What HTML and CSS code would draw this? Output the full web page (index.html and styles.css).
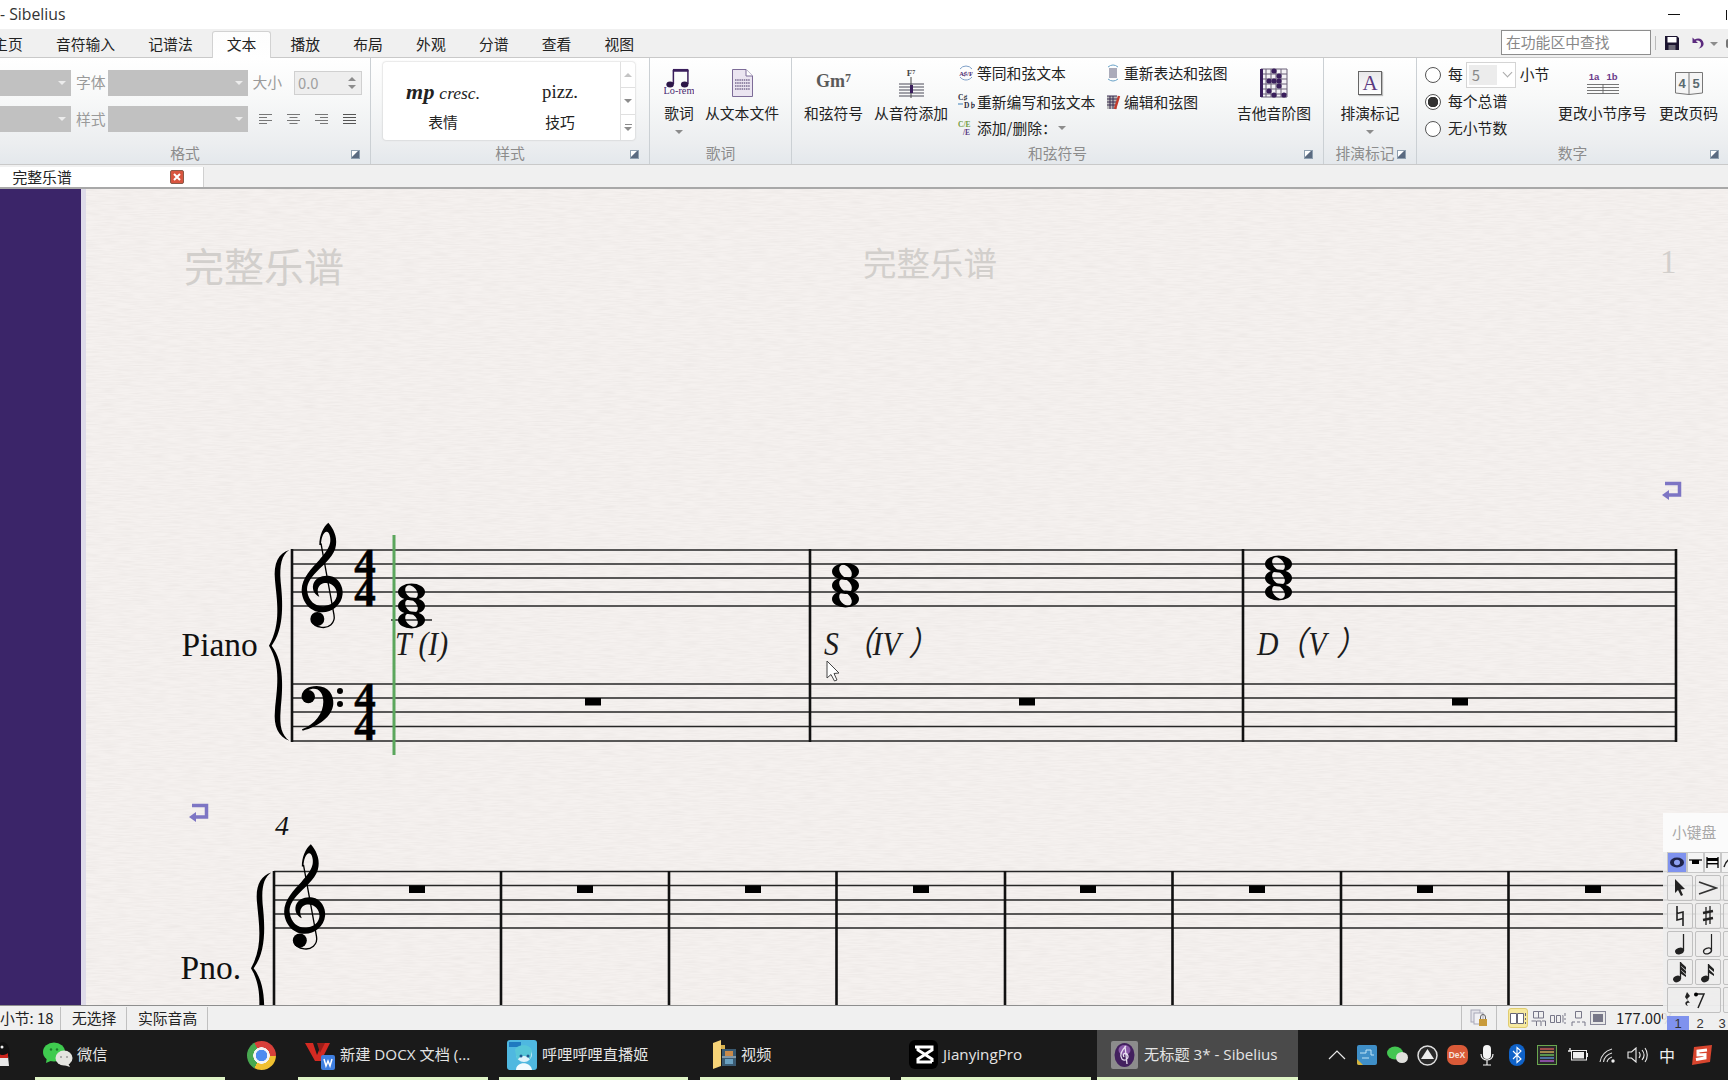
FILE: index.html
```html
<!DOCTYPE html>
<html lang="zh">
<head>
<meta charset="utf-8">
<title>无标题 3* - Sibelius</title>
<link rel="stylesheet" href="styles.css">
</head>
<body>
<svg class="defs" width="0" height="0" aria-hidden="true">
  <defs>
    <filter id="paper" x="0" y="0" width="100%" height="100%">
      <feTurbulence type="fractalNoise" baseFrequency="0.06 0.75" numOctaves="2" seed="4"/>
      <feColorMatrix values="0 0 0 0 .45  0 0 0 0 .41  0 0 0 0 .39  .2 0 0 0 -.065"/>
    </filter>
    <g id="clef-treble" transform="translate(160 500) scale(.3333)">
      <path d="M505 68C520 85 532 110 528 135C525 165 495 190 470 215C450 235 438 255 442 275C446 305 470 322 495 318C520 314 535 295 530 275C526 255 505 245 490 250C475 255 468 270 478 290C465 285 455 270 460 252C466 232 490 224 510 228C535 232 550 258 548 282C545 315 515 338 485 337C450 336 425 305 425 270C425 235 455 205 478 180C490 165 505 150 510 130C514 115 508 95 500 95C490 95 483 115 483 135L478 135C478 105 490 80 505 68Z"/>
      <path d="M483 130L522 345C527 370 505 385 485 382C470 380 458 372 455 360" fill="none" stroke="#000" stroke-width="4"/>
      <circle cx="472" cy="357" r="21"/>
    </g>
    <g id="clef-bass" transform="translate(160 500) scale(.3333)">
      <path d="M425 590C425 570 445 558 470 558C505 558 522 585 520 612C517 650 475 680 428 692L426 688C465 672 490 640 490 605C490 580 478 566 462 566C448 566 438 574 434 584Z"/>
      <circle cx="445" cy="590" r="20"/>
      <circle cx="540" cy="573" r="9"/>
      <circle cx="540" cy="612" r="9"/>
    </g>
    <path id="brace" transform="translate(160 500) scale(.3333)" d="M388 150C355 160 340 190 345 240C350 300 365 370 327 437C365 500 350 570 345 630C340 680 355 710 388 722C365 705 358 680 362 630C368 570 375 490 335 437C375 385 368 300 362 245C358 195 365 165 388 150Z"/>
    <path id="whole" fill-rule="evenodd" d="M-13.5 0a13.5 8.5 0 1 0 27 0a13.5 8.5 0 1 0-27 0zM-4.9-5.8A7.6 4.900 50 1 0 4.900 5.800A7.6 4.900 50 1 0-4.900-5.800z"/>
    <g id="ret">
      <path d="M192 805.5H206.5V817H194" fill="none" stroke="#7d75c4" stroke-width="3.5"/>
      <path d="M189 817L196 812V822Z" fill="#7d75c4"/>
    </g>
    <rect id="rest" x="-8" y="0" width="16" height="7.5"/>
  </defs>
</svg>

<div class="app">
  <header class="titlebar">
    <span class="title-text">- Sibelius</span>
    <span class="win-min"></span>
    <span class="win-max"></span>
  </header>

  <nav class="tabs">
    <span class="tab">主页</span>
    <span class="tab">音符输入</span>
    <span class="tab">记谱法</span>
    <span class="tab tab-active">文本</span>
    <span class="tab">播放</span>
    <span class="tab">布局</span>
    <span class="tab">外观</span>
    <span class="tab">分谱</span>
    <span class="tab">查看</span>
    <span class="tab">视图</span>
    <span class="search">在功能区中查找</span>
    <span class="qa-sep"></span>
    <svg class="qa-save" width="16" height="16" viewBox="0 0 16 16"><path d="M1 1H13L15 3V15H1Z" fill="#1c1530"/><rect x="3.5" y="2" width="9" height="5.5" fill="#fff"/><rect x="4.5" y="10" width="7" height="5" fill="#6d6a78"/></svg>
    <svg class="qa-undo" width="16" height="16" viewBox="0 0 16 16"><path d="M3.5 2.5V8H9L6.8 5.9C9 4.8 12 6 12 9C12 11 11 12.5 9.5 13.5C13 13 15 10.800 14.500 8C14 4 9.500 2 5.600 4.500Z" fill="#5b2a7e"/></svg>
    <span class="tri tri-gray qa-arrow"></span>
    <span class="qa-cut"></span>
  </nav>

  <section class="ribbon">
    <div class="group g-format">
      <div class="format-body">
        <div class="frow">
          <span class="dd dd-a"><span class="tri tri-light"></span></span>
          <span class="flabel l-font lift">字体</span>
          <span class="dd dd-b"><span class="tri tri-light"></span></span>
          <span class="flabel l-size lift">大小</span>
          <span class="spin">0.0<span class="spin-btns"><span class="tri tri-up"></span><span class="tri tri-gray"></span></span></span>
        </div>
        <div class="frow frow-2">
          <span class="dd dd-a"><span class="tri tri-light"></span></span>
          <span class="flabel l-font">样式</span>
          <span class="dd dd-b"><span class="tri tri-light"></span></span>
          <span class="aligns">
            <svg width="13" height="11" viewBox="0 0 13 11"><path d="M0 .5H13M0 3.500H8M0 6.500H13M0 9.500H8" stroke="#777"/></svg>
            <svg width="13" height="11" viewBox="0 0 13 11"><path d="M0 .5H13M2.500 3.500H10.500M0 6.500H13M2.500 9.500H10.500" stroke="#777"/></svg>
            <svg width="13" height="11" viewBox="0 0 13 11"><path d="M0 .5H13M5 3.500H13M0 6.500H13M5 9.500H13" stroke="#777"/></svg>
            <svg width="13" height="11" viewBox="0 0 13 11"><path d="M0 .5H13M0 3.500H13M0 6.500H13M0 9.500H13" stroke="#555"/></svg>
          </span>
        </div>
      </div>
      <div class="group-label">格式</div>
      <span class="launcher"></span>
    </div>

    <div class="group g-style">
      <div class="gallery">
        <div class="gitem gitem-a"><span class="sample"><b>mp</b> <i>cresc.</i></span><span class="gname">表情</span></div>
        <div class="gitem gitem-b"><span class="sample">pizz.</span><span class="gname">技巧</span></div>
        <div class="gscroll">
          <span class="gs"><span class="tri tri-up tri-pale"></span></span>
          <span class="gs"><span class="tri tri-gray"></span></span>
          <span class="gs gs-more"><span class="gs-bar"></span><span class="tri tri-gray"></span></span>
        </div>
      </div>
      <div class="group-label">样式</div>
      <span class="launcher"></span>
    </div>

    <div class="group g-lyrics">
      <div class="group-body lyrics-body">
        <div class="big w30">
          <span class="icon">
            <svg width="32" height="30" viewBox="0 0 32 30"><path d="M9.500 0H26V3H9.500Z" fill="#3a1e5c"/><path d="M10 1V16M25.500 1V16" stroke="#3a1e5c" stroke-width="1.600"/><ellipse cx="6.500" cy="16.500" rx="4" ry="3.200" fill="#2c1648"/><ellipse cx="22" cy="16.500" rx="4" ry="3.200" fill="#2c1648"/><text class="ico-lorem" x="16" y="27">Lo-rem</text></svg>
          </span>
          <span class="big-text">歌词</span>
          <span class="tri tri-gray big-arrow"></span>
        </div>
        <div class="big w74">
          <span class="icon">
            <svg width="21" height="28" viewBox="0 0 21 28"><path d="M.5 .5H14L20.500 7V27.500H.5Z" fill="#ebe5f1" stroke="#7d6c98"/><path d="M14 .5V7H20.500" fill="#fff" stroke="#7d6c98"/><path d="M3 11H18M3 14H18M3 17H18M3 20H18" stroke="#3f2e60" stroke-dasharray="1.500 .7"/></svg>
          </span>
          <span class="big-text">从文本文件</span>
        </div>
      </div>
      <div class="group-label">歌词</div>
    </div>

    <div class="group g-chords">
      <div class="group-body chords-body">
        <div class="big w59">
          <span class="icon"><span class="gm">Gm<sup>7</sup></span></span>
          <span class="big-text">和弦符号</span>
        </div>
        <div class="big w74">
          <span class="icon">
            <svg width="28" height="30" viewBox="0 0 28 30"><text class="ico-f7" x="14" y="8">F<tspan dy="-2" font-size="6">7</tspan></text><path d="M14 9V30" stroke="#444"/><path d="M2 16H27M2 19H27M2 22H27M2 25H27M2 28H27" stroke="#4a4a58" stroke-width="1.100"/><path d="M13 17H16V25H13Z" fill="#3a1e5c"/></svg>
          </span>
          <span class="big-text">从音符添加</span>
        </div>
        <div class="small-col c1">
          <div class="small"><svg class="sm-ic" width="18" height="18" viewBox="0 0 18 18"><path d="M3 5A7.500 7.500 0 0 1 15 5M15 13A7.500 7.500 0 0 1 3 13" fill="none" stroke="#7fa0c8"/><text class="ico-tiny" x="9" y="12">A♯/F</text></svg>等同和弦文本</div>
          <div class="small"><svg class="sm-ic" width="18" height="18" viewBox="0 0 18 18"><text class="ico-tiny2" x="1" y="7">C♯</text><path d="M1 11H6" stroke="#3d7fb8"/><text class="ico-tiny2" x="7" y="15">D♭</text></svg>重新编写和弦文本</div>
          <div class="small"><svg class="sm-ic" width="18" height="18" viewBox="0 0 18 18"><text class="ico-tiny3" x="1" y="8">C/E</text><text class="ico-tiny4" x="6" y="16">/E</text></svg>添加/删除：<span class="tri tri-gray small-arrow"></span></div>
        </div>
        <div class="small-col c2">
          <div class="small"><svg class="sm-ic" width="18" height="18" viewBox="0 0 18 18"><path d="M4 3A8 8 0 0 1 14 3M14 15A8 8 0 0 1 4 15" fill="none" stroke="#6aa3c8"/><path d="M5 5H13M5 7H13M5 9H13M5 11H13M5 13H13" stroke="#5b5b78" stroke-width="1.100"/></svg>重新表达和弦图</div>
          <div class="small"><svg class="sm-ic" width="18" height="18" viewBox="0 0 18 18"><rect x="3" y="3" width="10" height="13" fill="#bbb"/><path d="M3 3H13M3 6H13M3 9H13M3 12H13M6 3V16M9 3V16" stroke="#3a2c50"/><path d="M15 3L11 16" stroke="#c23a2c" stroke-width="2.500"/></svg>编辑和弦图</div>
        </div>
        <div class="big w74">
          <span class="icon">
            <svg width="28" height="30" viewBox="0 0 28 30"><path d="M1 1H27V29H1ZM1 6H27M1 11H27M1 16H27M1 21H27M1 26H27M6 1V29M11 1V29M16 1V29M21 1V29" fill="#f4f2f6" stroke="#6b6078"/><g fill="#3a1e5c"><rect x="0" y="1" width="3" height="28"/><circle cx="14" cy="3" r="2.600"/><circle cx="19" cy="8" r="2.600"/><circle cx="14" cy="13" r="2.600"/><circle cx="19" cy="13" r="2.600"/><circle cx="9" cy="13" r="2.600"/><circle cx="19" cy="18" r="2.600"/><circle cx="9" cy="23" r="2.600"/><circle cx="14" cy="27" r="2.600"/><circle cx="24" cy="27" r="2.600"/></g></svg>
          </span>
          <span class="big-text">吉他音阶图</span>
        </div>
      </div>
      <div class="group-label">和弦符号</div>
      <span class="launcher"></span>
    </div>

    <div class="group g-marks">
      <div class="group-body marks-body">
        <div class="big w59">
          <span class="icon"><span class="abox">A</span></span>
          <span class="big-text">排演标记</span>
          <span class="tri tri-gray big-arrow"></span>
        </div>
      </div>
      <div class="group-label label-marks">排演标记</div>
      <span class="launcher launcher-marks"></span>
    </div>

    <div class="group g-numbers">
      <div class="group-body numbers-body">
        <div class="radios">
          <div class="radio-row"><span class="radio"></span>每<span class="sel"><span class="sel-val">5</span><span class="chev"></span></span><span class="sel-after">小节</span></div>
          <div class="radio-row"><span class="radio radio-on"></span>每个总谱</div>
          <div class="radio-row"><span class="radio"></span>无小节数</div>
        </div>
        <div class="big w89">
          <span class="icon">
            <svg width="36" height="24" viewBox="0 0 36 24"><text class="ico-bar" x="9" y="9">1a</text><text class="ico-bar" x="27" y="9">1b</text><path d="M2 13.500H34M2 16.500H34M2 19.500H34M2 22.500H34M18 13V23" stroke="#666" stroke-width=".9"/></svg>
          </span>
          <span class="big-text">更改小节序号</span>
        </div>
        <div class="big w59 pages">
          <span class="icon">
            <svg width="28" height="24" viewBox="0 0 28 24"><path d="M.5 1.500H27.500V22L14 23.500L.5 22Z" fill="#f5f5f5" stroke="#777"/><path d="M14 1.500V23" stroke="#777"/><text class="ico-page" x="7" y="17">4</text><text class="ico-page" x="21" y="17">5</text></svg>
          </span>
          <span class="big-text">更改页码</span>
        </div>
      </div>
      <div class="group-label label-num">数字</div>
      <span class="launcher launcher-num"></span>
    </div>
  </section>

  <div class="doctabs">
    <div class="doctab">
      <span>完整乐谱</span>
      <span class="doc-close"><svg width="12" height="12" viewBox="0 0 12 12"><path d="M3 3L9 9M9 3L3 9" stroke="#fff" stroke-width="2"/></svg></span>
    </div>
  </div>

  <main class="main">
    <div class="side"></div>
    <div class="side-edge"></div>
    <svg class="score" width="1642" height="816" viewBox="86 189 1642 816">
      <rect class="paper" x="86" y="189" width="1642" height="816"/>
      <rect x="86" y="189" width="1642" height="816" filter="url(#paper)"/>

      <text class="faint t-big" x="184" y="282">完整乐谱</text>
      <text class="faint t-mid" x="863" y="276">完整乐谱</text>
      <text class="faint t-num" x="1660" y="273">1</text>

      <use href="#ret" x="1473" y="-322"/>
      <use href="#ret"/>

      <path class="staff" d="M292 550H1676M292 564H1676M292 578H1676M292 592H1676M292 606H1676M292 684H1676M292 698H1676M292 712H1676M292 726.500H1676M292 741H1676"/>
      <path class="bar" d="M292 549V742M810 549V742M1243 549V742M1676 549V742"/>
      <path class="staff" d="M391 620H432"/>
      <use href="#brace"/>
      <use href="#clef-treble"/>
      <use href="#clef-bass"/>
      <text class="timesig"><tspan x="365" y="578">4</tspan><tspan x="365" y="606">4</tspan></text>
      <text class="timesig"><tspan x="365" y="712">4</tspan><tspan x="365" y="740">4</tspan></text>
      <text class="instr" x="181.500" y="656">Piano</text>

      <use href="#whole" x="411.500" y="592"/>
      <use href="#whole" x="411.500" y="606"/>
      <use href="#whole" x="411.500" y="620"/>
      <use href="#whole" x="845.500" y="571.500"/>
      <use href="#whole" x="845.500" y="585.500"/>
      <use href="#whole" x="845.500" y="599"/>
      <use href="#whole" x="1278.500" y="564"/>
      <use href="#whole" x="1278.500" y="578"/>
      <use href="#whole" x="1278.500" y="592"/>

      <use href="#rest" x="593" y="698"/>
      <use href="#rest" x="1027" y="698"/>
      <use href="#rest" x="1460" y="698"/>

      <text class="chord" transform="translate(395 655) scale(.9 1)">T (I)</text>
      <text class="chord" transform="translate(824 655) scale(.9 1)">S<tspan x="22">（</tspan><tspan x="54">IV</tspan><tspan x="94">）</tspan></text>
      <text class="chord" transform="translate(1257 655) scale(.9 1)">D<tspan x="22">（</tspan><tspan x="57">V</tspan><tspan x="88">）</tspan></text>

      <rect class="playline" x="392.500" y="535" width="3" height="220"/>

      <path class="cursor" d="M827 661V678L831 674.500L834.500 681L837 680L834 673.500L839 673Z"/>

      <text class="barnum" x="275" y="835">4</text>
      <text class="instr" x="180.500" y="979">Pno.</text>
      <path class="staff" d="M274 871.500H1728M274 885.500H1728M274 900H1728M274 914H1728M274 928H1728"/>
      <path class="bar" d="M274 871V1005M501 871V1005M669 871V1005M836.500 871V1005M1005 871V1005M1172.500 871V1005M1341 871V1005M1508.500 871V1005"/>
      <use href="#brace" x="-18" y="322.500"/>
      <use href="#clef-treble" x="-17.500" y="321.500"/>
      <use href="#rest" x="417" y="885.500"/>
      <use href="#rest" x="585" y="885.500"/>
      <use href="#rest" x="753" y="885.500"/>
      <use href="#rest" x="921" y="885.500"/>
      <use href="#rest" x="1088" y="885.500"/>
      <use href="#rest" x="1257" y="885.500"/>
      <use href="#rest" x="1425" y="885.500"/>
      <use href="#rest" x="1593" y="885.500"/>
    </svg>
  </main>

  <footer class="status">
    <span class="st st-a">小节: 18</span>
    <span class="st st-b">无选择</span>
    <span class="st st-c">实际音高</span>
    <div class="st-right">
      <span class="st-lock">
        <svg width="18" height="18" viewBox="0 0 18 18"><rect x="1" y="1" width="9" height="12" fill="#e4e4ea" stroke="#a8a8b8"/><rect x="4" y="4" width="9" height="11" fill="#f0f0f4" stroke="#a8a8b8"/><rect x="9" y="10" width="8" height="7" fill="#c89a3a"/><path d="M10.500 10V8A2.500 2.500 0 0 1 15.500 8V10" fill="none" stroke="#666"/></svg>
      </span>
      <span class="view view-on"><svg width="17" height="13" viewBox="0 0 17 13"><path d="M.5 1.500H6.500V11.500H.5ZM7.500 1.500H13.500V11.500H7.500Z" fill="#fff" stroke="#667"/><path d="M15.500 1V4M15.500 6V8M15.500 10V12" stroke="#667"/></svg></span>
      <span class="view"><svg width="17" height="17" viewBox="0 0 17 17"><path d="M3.500 1.500H8.500V8H3.500ZM8.500 1.500H13.500V8H8.500ZM1.500 11H6.500V16M7 11H11V16M12 11H15.500V16" fill="none" stroke="#778"/></svg></span>
      <span class="view"><svg width="17" height="13" viewBox="0 0 17 13"><path d="M.5 3.500H4.500V10.500H.5ZM6.500 3.500H10.500V10.500H6.500ZM15 1V4M15 6V8M15 10V12M12.500 3.500H13V10.500" fill="none" stroke="#778"/></svg></span>
      <span class="view"><svg width="15" height="17" viewBox="0 0 15 17"><path d="M4.500 1.500H10.500V8H4.500ZM1 16V12H4M6 12H9M11 12H14V16" fill="none" stroke="#778"/></svg></span>
      <span class="view"><svg width="16" height="14" viewBox="0 0 16 14"><rect x=".5" y=".5" width="15" height="13" fill="#e8e8e8" stroke="#889"/><rect x="3" y="3" width="10" height="8" fill="#778"/></svg></span>
      <span class="zoomval">177.00%</span>
    </div>
  </footer>

  <aside class="keypad">
    <div class="kp-title">小键盘</div>
    <div class="kp-tools">
      <span class="kt kt-on"><svg width="16" height="11" viewBox="0 0 16 11"><ellipse cx="8" cy="5.500" rx="7" ry="5" fill="#20244a"/><ellipse cx="8" cy="5.500" rx="3" ry="2.800" fill="#8fa0f0"/></svg></span>
      <span class="kt"><svg width="13" height="8" viewBox="0 0 13 8"><path d="M0 1H13" stroke="#222" stroke-width="1.400"/><rect x="3" y="1" width="7" height="4"/></svg></span>
      <span class="kt"><svg width="13" height="11" viewBox="0 0 13 11"><path d="M1 0V11M12 0V11" stroke="#222" stroke-width="1.500"/><rect x="1" y="1" width="11" height="3"/><rect x="1" y="6" width="11" height="1.400"/></svg></span>
      <span class="kt"><svg width="13" height="11" viewBox="0 0 13 11"><path d="M1 10C3 3 8 1 12 1" fill="none" stroke="#222" stroke-width="1.500"/></svg></span>
    </div>
    <div class="kp-grid">
      <span class="kb"><svg width="12" height="18" viewBox="0 0 12 18"><path d="M1 0V14L4 11L7 17L9 16L6.500 10.500L11 10Z" fill="#222"/></svg></span>
      <span class="kb"><svg width="20" height="14" viewBox="0 0 20 14"><path d="M1 1L18 7L1 13" fill="none" stroke="#333" stroke-width="1.600"/></svg></span>
      <span class="kb"></span>
      <span class="kb"><svg width="10" height="20" viewBox="0 0 10 20"><path d="M2 0V14L8 12.500M8 20V6L2 7.500" fill="none" stroke="#222" stroke-width="1.600"/></svg></span>
      <span class="kb"><svg width="12" height="20" viewBox="0 0 12 20"><path d="M4 1V19M8 0V18" stroke="#222" stroke-width="1.300"/><path d="M1 7L11 5M1 14L11 12" stroke="#222" stroke-width="2.300"/></svg></span>
      <span class="kb"></span>
      <span class="kb"><svg width="12" height="22" viewBox="0 0 12 22"><path d="M9.500 1V18" stroke="#222" stroke-width="1.300"/><ellipse cx="5.500" cy="18" rx="4.500" ry="3.300" fill="#222" transform="rotate(-20 5.500 18)"/></svg></span>
      <span class="kb"><svg width="12" height="22" viewBox="0 0 12 22"><path d="M9.500 1V18" stroke="#222" stroke-width="1.200"/><ellipse cx="5.500" cy="18" rx="4" ry="2.800" fill="none" stroke="#222" stroke-width="1.300" transform="rotate(-20 5.500 18)"/></svg></span>
      <span class="kb"></span>
      <span class="kb"><svg width="14" height="22" viewBox="0 0 14 22"><path d="M7.500 1V18" stroke="#222" stroke-width="1.300"/><ellipse cx="4" cy="18" rx="4" ry="3.200" fill="#222" transform="rotate(-20 4 18)"/><path d="M7.500 1L13 6V9L7.500 4.500ZM7.500 5L13 10V13L7.500 8.500ZM7.500 9L13 14V16L7.500 12.500Z" fill="#222"/></svg></span>
      <span class="kb"><svg width="14" height="22" viewBox="0 0 14 22"><path d="M7.500 3V18" stroke="#222" stroke-width="1.300"/><ellipse cx="4" cy="18" rx="4" ry="3.200" fill="#222" transform="rotate(-20 4 18)"/><path d="M7.500 3L13 8V11L7.500 6.500ZM7.500 8L13 13V15L7.500 11.500Z" fill="#222"/></svg></span>
      <span class="kb"></span>
      <span class="kb kb-wide"><svg width="22" height="18" viewBox="0 0 22 18"><path d="M4 1L7 5L4 8L7 12C4 11 3 13 5 15C1 14 2 10 5 10L2 6Z" fill="#222"/><path d="M12 3H21L15 17" fill="none" stroke="#222" stroke-width="1.500"/><circle cx="13" cy="3.500" r="2"/></svg></span>
      <span class="kb"></span>
    </div>
    <div class="kp-pages"><span class="kpn kpn-on">1</span><span class="kpn">2</span><span class="kpn">3</span></div>
  </aside>

  <footer class="taskbar">
    <div class="task t-qq">
      <svg width="22" height="28" viewBox="0 0 22 28"><ellipse cx="3" cy="13" rx="7" ry="12" fill="#111"/><path d="M-3 15H8L9 25H-3Z" fill="#e8e8e8"/><path d="M-3 12C2 15 6 14 8 12V17H-3Z" fill="#c8241c"/><circle cx="2" cy="6" r="1.500" fill="#eee"/></svg>
    </div>
    <div class="task t-wechat">
      <svg class="tk-ic" width="30" height="26" viewBox="0 0 30 26"><ellipse cx="11" cy="10" rx="11" ry="9.500" fill="#3fcb4f"/><path d="M4 15L3 21L10 18Z" fill="#3fcb4f"/><ellipse cx="21" cy="16" rx="8.500" ry="7.500" fill="#e4e4e0"/><path d="M25 21L27 25L21 23Z" fill="#e4e4e0"/><circle cx="8" cy="7.500" r="1.200" fill="#1c7a2c"/><circle cx="14" cy="7.500" r="1.200" fill="#1c7a2c"/><circle cx="18" cy="15" r="1" fill="#999"/><circle cx="24" cy="15" r="1" fill="#999"/></svg>
      <span>微信</span>
    </div>
    <div class="task-plain t-chrome"><span class="chrome"></span></div>
    <div class="task t-wps">
      <svg class="tk-ic" width="30" height="30" viewBox="0 0 30 30"><path d="M0 3L8 3L12 15L17 3L25 3L16 21H10Z" fill="#d42a22"/><path d="M12 3H20L15 13Z" fill="#9a1c18"/><rect x="16" y="15" width="14" height="15" rx="2" fill="#3f7fe0"/><path d="M19 19L21 26L23 21L25 26L27 19" fill="none" stroke="#fff" stroke-width="1.500"/></svg>
      <span>新建 DOCX 文档 (...</span>
    </div>
    <div class="task t-bili">
      <svg class="tk-ic" width="30" height="30" viewBox="0 0 30 30"><rect width="30" height="30" rx="3" fill="#4fb8e0"/><rect x="2" y="2" width="12" height="5" fill="#1f7ac0"/><circle cx="17" cy="14" r="8" fill="#dff3fb"/><path d="M8 10C9 4 24 3 25 11L23 20C21 15 13 14 10 21Z" fill="#57c6d8"/><path d="M9 30C9 21 24 21 25 30Z" fill="#f2fbff"/><circle cx="14" cy="16" r="1.500" fill="#1f5a90"/><circle cx="21" cy="16" r="1.500" fill="#1f5a90"/></svg>
      <span>呼哩呼哩直播姬</span>
    </div>
    <div class="task t-folder">
      <svg class="tk-ic" width="24" height="30" viewBox="0 0 24 30"><path d="M1 3L9 0V26L1 29Z" fill="#f6d377"/><path d="M9 5H13V9H9Z" fill="#d9b24e"/><rect x="10" y="9" width="14" height="17" fill="#3a5a72"/><path d="M10 17H24" stroke="#cbd5dc"/><rect x="13" y="11" width="8" height="5" fill="#c98a4a"/><rect x="13" y="19" width="8" height="5" fill="#6aa0c0"/></svg>
      <span>视频</span>
    </div>
    <div class="task t-jy">
      <svg class="tk-ic" width="29" height="29" viewBox="0 0 29 29"><rect width="29" height="29" rx="6" fill="#000"/><path d="M6 7H23V10L9 19V22H23M23 22V19L9 10V7" fill="none" stroke="#fff" stroke-width="3"/></svg>
      <span>JianyingPro</span>
    </div>
    <div class="task t-sib">
      <svg class="tk-ic" width="29" height="30" viewBox="0 0 29 30"><rect x="1" y="1" width="27" height="28" rx="2" fill="#8c8c8c"/><ellipse cx="14.500" cy="15" rx="10" ry="12" fill="#42205e"/><ellipse cx="14.500" cy="10" rx="6" ry="5" fill="#8a5aa8"/><path d="M16 6C11 11 9 15 12 19C15 22 20 18 17 14C15 12 12 14 14 17M15 6L17 24" fill="none" stroke="#e8dff0" stroke-width="1.300"/></svg>
      <span>无标题 3* - Sibelius</span>
    </div>
    <div class="tray">
      <span class="tr"><svg width="18" height="10" viewBox="0 0 18 10"><path d="M1 9L9 1L17 9" fill="none" stroke="#e8e8e8" stroke-width="1.200"/></svg></span>
      <span class="tr"><svg width="20" height="20" viewBox="0 0 20 20"><rect width="20" height="20" rx="2" fill="#3f8fc8"/><path d="M3 8H9V5H14V10H17M5 13H12" fill="none" stroke="#bfe3f5"/><path d="M0 14L6 20H2Q0 20 0 18Z" fill="#d8b43a"/></svg></span>
      <span class="tr"><svg width="21" height="18" viewBox="0 0 21 18"><ellipse cx="8" cy="7" rx="8" ry="6.500" fill="#44c652"/><ellipse cx="15" cy="11.500" rx="6" ry="5.500" fill="#e0e0dc"/></svg></span>
      <span class="tr"><svg width="21" height="21" viewBox="0 0 21 21"><circle cx="10.500" cy="10.500" r="9.500" fill="#2a2a2a" stroke="#ddd" stroke-width="1.500"/><path d="M10.500 4L17 14H4Z" fill="#eee"/></svg></span>
      <span class="tr"><span class="dex">DeX</span></span>
      <span class="tr"><svg width="14" height="21" viewBox="0 0 14 21"><rect x="3" y="0" width="8" height="14" rx="4" fill="#f4f4f4"/><path d="M1 9C1 17 13 17 13 9M7 15V20M3 20H11" fill="none" stroke="#f4f4f4" stroke-width="1.200"/></svg></span>
      <span class="tr"><svg width="16" height="22" viewBox="0 0 16 22"><rect width="16" height="22" rx="8" fill="#0f62c8"/><path d="M4 7L12 15L8 18.500V3.500L12 7L4 15" fill="none" stroke="#fff" stroke-width="1.100"/></svg></span>
      <span class="tr"><svg width="20" height="20" viewBox="0 0 20 20"><rect x=".5" y=".5" width="19" height="19" fill="#2a2a2a" stroke="#6aa84f"/><path d="M3 4H17" stroke="#c85a5a" stroke-width="1.500"/><path d="M3 7H17" stroke="#c8a85a" stroke-width="1.500"/><path d="M3 10H17" stroke="#6ab85a" stroke-width="1.500"/><path d="M3 13H17" stroke="#5a8ac8" stroke-width="1.500"/><path d="M3 16H17" stroke="#a85ac8" stroke-width="1.500"/></svg></span>
      <span class="tr"><svg width="21" height="14" viewBox="0 0 21 14"><rect x="4.500" y="2.500" width="15" height="9.500" fill="none" stroke="#eee"/><rect x="6" y="4" width="11" height="6.500" fill="#eee"/><rect x="19.500" y="5" width="1.500" height="4" fill="#eee"/><path d="M1 3H5M3 0V3" stroke="#eee" stroke-width="1.300"/></svg></span>
      <span class="tr"><svg width="17" height="16" viewBox="0 0 17 16"><path d="M1 15C2 9 6 4 13 2M4.500 15C5 11 8 7.500 13 6M8 15C8.500 13 10 11 13 10" fill="none" stroke="#ddd" stroke-width="1.100"/><circle cx="14" cy="14" r="1.700" fill="#eee"/></svg></span>
      <span class="tr"><svg width="21" height="16" viewBox="0 0 21 16"><path d="M1 5H4.500L9 1V15L4.500 11H1Z" fill="none" stroke="#eee" stroke-width="1.100"/><path d="M12 5C13.500 7 13.500 9 12 11M15 3C17.500 6 17.500 10 15 13M18 1C21 5 21 11 18 15" fill="none" stroke="#eee" stroke-width="1.100"/></svg></span>
      <span class="tr tr-ime">中</span>
      <span class="tr tr-s"><svg width="22" height="20" viewBox="0 0 22 20"><path d="M3 2L21 0L19 17L1 20Z" fill="#d8452e"/><path d="M16 5L7 6V10L14 9.500V13L5 14.500" fill="none" stroke="#fff" stroke-width="3"/></svg></span>
    </div>
  </footer>
</div>
</body>
</html>
```

FILE: styles.css
```css
* { box-sizing: border-box; }
html, body { margin: 0; padding: 0; }
body {
  width: 1728px;
  height: 1080px;
  overflow: hidden;
  background: #f0f0f0;
  color: #222;
  font-family: "Noto Sans CJK SC", "Noto Sans", sans-serif;
  font-size: 14.8px;
  line-height: 1;
}
.defs { position: absolute; }
.app {
  position: relative;
  display: flex;
  flex-direction: column;
  width: 1728px;
  height: 1080px;
  overflow: hidden;
}

/* title bar */
.titlebar {
  flex: 0 0 29px;
  display: flex;
  align-items: center;
  background: #fff;
}
.title-text {
  font-family: "Open Sans", "Noto Sans CJK SC", sans-serif;
  font-size: 15.800px;
  color: #333;
  padding-top: 1px;
}
.win-min { width: 12px; height: 1px; background: #111; margin-left: auto; margin-right: 46px; }
.win-max { width: 2px; height: 10px; border-left: 1px solid #111; }

/* tabs */
.tabs {
  flex: 0 0 29px;
  display: flex;
  align-items: flex-end;
  background: #f0f0f0;
  border-bottom: 1px solid #c9c9c9;
  position: relative;
}
.tab {
  flex: none;
  height: 26px;
  padding: 6px 16.600px 0;
  text-align: center;
}
.tab:first-child { margin-left: -23.500px; }
.tab-active {
  background: linear-gradient(#fdfdfd, #fff);
  border: 1px solid #d2d2d2;
  border-bottom: 0;
  border-radius: 3px 3px 0 0;
  padding: 5px 13.500px 1px;
  height: 27px;
  margin: 0 3px -1px;
}
.search {
  position: absolute;
  left: 1501px;
  top: 1px;
  width: 150px;
  height: 25px;
  padding: 4px 0 0 4px;
  background: #fff;
  border: 1px solid #8e8e8e;
  color: #888;
}
.qa-sep { position: absolute; left: 1655px; top: 7px; width: 1px; height: 14px; background: #bbb; }
.qa-save { position: absolute; left: 1664px; top: 6px; }
.qa-undo { position: absolute; left: 1689px; top: 6px; }
.qa-arrow { position: absolute; left: 1710px; top: 13px; }
.qa-cut { position: absolute; left: 1726px; top: 10px; width: 4px; height: 9px; background: #777; border-radius: 2px; }

.tri { display: inline-block; width: 0; height: 0; border-left: 4px solid transparent; border-right: 4px solid transparent; border-top: 4px solid #999; }
.tri-light { border-top-color: #ececec; }
.tri-gray { border-top-color: #8c8c8c; }
.tri-up { border-top: 0; border-bottom: 4px solid #8c8c8c; }
.tri-pale { border-bottom-color: #c4c4c4; }

/* ribbon */
.ribbon {
  flex: 0 0 107px;
  display: flex;
  background: linear-gradient(#ffffff 0%, #f8f9f9 35%, #eceef0 80%, #e4e8ec 100%);
  border-bottom: 1px solid #c9c9c9;
}
.group {
  position: relative;
  display: flex;
  flex-direction: column;
  flex: none;
  border-right: 1px solid #cbd0d4;
}
.g-format { width: 371px; }
.g-style { width: 279px; }
.g-lyrics { width: 142px; }
.g-chords { width: 532px; }
.g-marks { width: 93px; }
.g-numbers { width: 311px; border-right: 0; }
.group-body { flex: 1; display: flex; min-height: 0; }
.group-label {
  flex: 0 0 20px;
  line-height: 17px;
  text-align: center;
  color: #8c8c8c;
}
.label-marks { padding-right: 10px; }
.launcher {
  position: absolute;
  right: 10px;
  bottom: 5px;
  width: 9px;
  height: 9px;
  border: 1px solid #8fa0b0;
  background: linear-gradient(135deg, #fff 40%, #5a6a80 45%);
}
.launcher-marks { right: 10px; }
.launcher-num { right: 9px; }

.format-body { flex: 1; padding-top: 12px; }
.frow { display: flex; align-items: center; height: 26px; }
.frow-2 { margin-top: 10px; }
.dd {
  display: flex;
  align-items: center;
  justify-content: flex-end;
  height: 26px;
  padding-right: 5px;
  background: #c1c1c1;
}
.dd-a { width: 71px; }
.dd-b { width: 140px; }
.flabel { color: #9a9a9a; }
.lift { padding-bottom: 2px; }
.l-font { width: 37px; padding-left: 5px; }
.l-size { width: 46px; padding-left: 4.500px; }
.spin {
  display: flex;
  align-items: center;
  justify-content: space-between;
  width: 68px;
  height: 24px;
  padding: 0 3px;
  border: 1px solid #d0d0d0;
  background: #eeeeee;
  color: #a0a0a0;
}
.spin-btns { display: flex; flex-direction: column; gap: 4px; padding: 0 2px; }
.aligns { display: flex; align-items: center; gap: 15px; margin-left: 11px; }

.gallery {
  display: flex;
  flex: none;
  width: 252px;
  height: 78px;
  margin: 4px 0 3px 12px;
  background: #fff;
  border-radius: 3px;
  box-shadow: 0 0 2px #b8b8b8;
}
.g-style .group-label { margin-top: auto; }
.gitem { display: flex; flex-direction: column; align-items: center; padding-top: 19px; }
.gitem-a { width: 120px; }
.gitem-b { width: 114px; }
.sample {
  height: 22px;
  line-height: 22px;
  font-family: "Liberation Serif", serif;
  font-size: 18.700px;
  color: #222;
  white-space: nowrap;
}
.sample b { font-style: italic; font-size: 22px; font-weight: 700; letter-spacing: .3px; }
.sample i { font-size: 17.500px; }
.gname { margin-top: 12px; }
.gscroll {
  display: flex;
  flex-direction: column;
  width: 15px;
  margin-left: auto;
  border-left: 1px solid #e0e0e0;
}
.gs {
  flex: 1;
  display: flex;
  align-items: center;
  justify-content: center;
  border-bottom: 1px solid #e0e0e0;
}
.gs-more { flex-direction: column; gap: 2px; border-bottom: 0; }
.gs-bar { width: 7px; height: 1px; background: #8c8c8c; }

.big {
  display: flex;
  flex-direction: column;
  align-items: center;
  flex: none;
  white-space: nowrap;
  padding-top: 9px;
}
.w30 { width: 30px; }
.w59 { width: 59px; }
.w74 { width: 74px; }
.w89 { width: 89px; }
.icon { display: flex; align-items: center; justify-content: center; height: 36px; width: 100%; padding-bottom: 4px; }
.big-text { height: 20px; line-height: 20px; }
.big-arrow { margin-top: 7px; }

.lyrics-body { padding-left: 14px; gap: 11px; }
.chords-body { padding-left: 12px; }
.chords-body .big:nth-child(2) { margin-left: 11px; }
.c1 { width: 147px; margin-left: 9px; }
.c2 { width: 133px; }
.small-col { padding-top: 2px; flex: none; }
.small { display: flex; align-items: center; gap: 2px; height: 26px; white-space: nowrap; }
.small:nth-child(2) { margin-top: 3px; }
.sm-ic { flex: none; }
.small-arrow { margin-left: -1px; }
.gm { font-family: "Liberation Serif", serif; font-size: 18px; font-weight: 700; color: #5a5a5a; padding-bottom: 4px; }
.gm sup { font-size: 12px; vertical-align: 5px; line-height: 0; }
.abox {
  display: flex;
  align-items: center;
  justify-content: center;
  width: 24px;
  height: 24px;
  border: 1px solid #666;
  background: linear-gradient(#e8e8ea, #fff);
  box-shadow: 1px 1px 1px #bbb;
  font-family: "Liberation Serif", serif;
  font-size: 21px;
  color: #5a3a80;
}
.marks-body { justify-content: center; }

.numbers-body { padding-left: 8px; }
.radios { flex: 0 0 133px; padding-top: 3px; }
.radio-row { display: flex; align-items: center; height: 27px; gap: 7px; white-space: nowrap; }
.radio { flex: none; width: 16px; height: 16px; border-radius: 50%; border: 1px solid #555; background: #fff; }
.radio-on { background: radial-gradient(circle, #333 0 5px, #fff 5.500px); }
.sel {
  display: flex;
  align-items: center;
  width: 50px;
  height: 26px;
  margin-left: -4px;
  padding: 2px;
  border: 1px solid #d4d4d4;
  background: #fff;
}
.sel-val { width: 28px; height: 20px; line-height: 20px; padding-left: 3px; background: #ececec; color: #888; }
.chev { width: 7px; height: 7px; margin: -4px 0 0 7px; border-right: 1px solid #aaa; border-bottom: 1px solid #aaa; transform: rotate(45deg); }
.sel-after { margin-left: -3px; }
.pages { margin-left: 12px; }

.ico-lorem { font: 11px "Liberation Serif", serif; fill: #4a2a70; text-anchor: middle; }
.ico-f7 { font: 700 9px "Liberation Serif", serif; fill: #444; text-anchor: middle; }
.ico-tiny { font: 700 6.500px "Liberation Serif", serif; fill: #4a2a70; text-anchor: middle; }
.ico-tiny2 { font: 700 7.500px "Liberation Serif", serif; fill: #2a2a3a; }
.ico-tiny3 { font: 700 7.500px "Liberation Serif", serif; fill: #6f9a3a; }
.ico-tiny4 { font: 700 7.500px "Liberation Serif", serif; fill: #5a3a80; }
.ico-bar { font: 700 9.500px "Liberation Sans", sans-serif; fill: #6a3a8a; text-anchor: middle; }
.ico-page { font: 700 13px "Liberation Sans", sans-serif; fill: #5a6a70; text-anchor: middle; }

/* document tabs */
.doctabs {
  flex: 0 0 24px;
  display: flex;
  align-items: flex-start;
  padding-top: 2px;
  background: #f0f0f0;
  border-bottom: 2px solid #a8a8a8;
}
.doctab {
  display: flex;
  align-items: center;
  justify-content: space-between;
  width: 204px;
  height: 20px;
  padding: 0 19px 0 12.500px;
  background: #fff;
  border-right: 1px solid #d0d0d0;
}
.doc-close {
  display: flex;
  align-items: center;
  justify-content: center;
  width: 14px;
  height: 14px;
  background: #d8553f;
  border: 1px solid #8a5a4a;
  border-radius: 2px;
}

/* score area */
.main { flex: 1; min-height: 0; display: flex; overflow: hidden; }
.side { flex: 0 0 81px; background: #3b2569; }
.side-edge { flex: 0 0 5px; background: #dedbe9; }
.score { display: block; flex: none; }
.paper { fill: #f5f1ef; }
.faint { font-family: "Noto Sans CJK SC", sans-serif; fill: #d2cfcc; }
.t-big { font-size: 40px; }
.t-mid { font-size: 33.500px; }
.t-num { font-family: "Liberation Serif", serif; font-size: 33px; }
.staff { stroke: #262626; stroke-width: 1.600; fill: none; }
.bar { stroke: #111; stroke-width: 2.600; fill: none; }
.timesig { font-family: "Liberation Serif", serif; font-weight: 700; font-size: 43px; text-anchor: middle; fill: #000; stroke: #000; stroke-width: .5; }
.instr { font-family: "Liberation Serif", serif; font-size: 33.500px; fill: #111; }
.chord { font-family: "Liberation Serif", "Noto Sans CJK SC", serif; font-style: italic; font-size: 33px; fill: #1c1c1c; }
.barnum { font-family: "Liberation Serif", serif; font-style: italic; font-size: 28px; fill: #111; }
.playline { fill: #5ba65c; }
.cursor { fill: #fff; stroke: #444; stroke-width: 1; }

/* status bar */
.status {
  flex: 0 0 25px;
  display: flex;
  align-items: stretch;
  background: #f0f0f0;
  border-top: 1px solid #8e8e8e;
  overflow: hidden;
}
.st {
  display: flex;
  align-items: center;
  padding-bottom: 1px;
  margin-top: 1px;
  border-right: 1px solid #c0c0c0;
  white-space: nowrap;
}
.st-a { width: 61px; }
.st-b { width: 66px; padding-left: 11px; }
.st-c { width: 81px; padding-left: 11px; }
.st-right { display: flex; align-items: center; margin-left: 1253px; height: 24px; border-left: 1px solid #c0c0c0; }
.st-lock { display: flex; align-items: center; justify-content: center; width: 35px; height: 100%; border-right: 1px solid #c0c0c0; }
.view { display: flex; align-items: center; justify-content: center; width: 20px; height: 20px; }
.view-on { margin-left: 11px; background: #f6e9a0; border: 1px solid #e0cc70; border-radius: 3px; }
.zoomval { margin-left: 8px; color: #222; white-space: nowrap; }

/* keypad */
.keypad {
  position: absolute;
  right: 0;
  top: 813px;
  width: 65px;
  height: 217px;
  overflow: hidden;
  background: rgba(238, 238, 238, 0.88);
}
.kp-title {
  height: 39px;
  line-height: 38px;
  padding-left: 9px;
  background: #fbfbfb;
  color: #a8a8a8;
}
.kp-tools { display: flex; height: 21px; padding-left: 4px; }
.kt { flex: 0 0 17px; display: flex; align-items: center; justify-content: center; background: #f4f4f4; border: 1px solid #c8c8c8; }
.kt-on { flex-basis: 20px; background: #7f92ee; }
.kp-grid {
  display: grid;
  grid-template-columns: 26px 26px 26px;
  grid-auto-rows: 26px;
  gap: 2px;
  padding: 2px 0 0 4px;
}
.kb {
  display: flex;
  align-items: center;
  justify-content: center;
  border: 1px solid #c0c0c0;
  border-radius: 2px;
  background: rgba(236, 236, 236, 0.65);
}
.kb-wide { grid-column: span 2; }
.kp-pages { display: flex; padding: 3px 0 0 4px; }
.kpn {
  flex: 0 0 22px;
  height: 17px;
  padding-top: 1px;
  text-align: center;
  font-family: "Liberation Sans", sans-serif;
  font-size: 13px;
  color: #333;
}
.kpn-on { background: #7f92ee; }

/* taskbar */
.taskbar {
  flex: 0 0 50px;
  display: flex;
  background: #1a1a1a;
  color: #e4e4e4;
  font-family: "Open Sans", "Noto Sans CJK SC", sans-serif;
  font-size: 15.200px;
}
.task {
  flex: none;
  display: flex;
  align-items: center;
  gap: 5px;
  padding-top: 2px;
  white-space: nowrap;
  border-bottom: 3px solid #dff4c6;
}
.task span { padding-top: 1px; }
.tk-ic { flex: none; }
.t-qq { width: 35px; border-bottom-color: transparent; }
.t-wechat { width: 190px; padding-left: 8px; gap: 4px; }
.task-plain { flex: 0 0 73px; display: flex; align-items: center; padding-left: 22px; }
.chrome {
  width: 29px;
  height: 29px;
  border-radius: 50%;
  background:
    radial-gradient(circle, #4d8cf0 0 5.500px, #f4f4f4 6px 8px, transparent 8.500px),
    conic-gradient(from -30deg, #d8403a 0 120deg, #f0c030 120deg 240deg, #48a850 240deg 360deg);
}
.t-wps { width: 190px; padding-left: 7px; }
.t-bili { width: 189px; margin-left: 11px; padding-left: 8px; }
.t-folder { width: 190px; margin-left: 12px; padding-left: 12px; }
.t-jy { width: 190px; margin-left: 11px; padding-left: 8px; }
.t-sib { width: 201px; margin-left: 6px; padding-left: 13px; background: #4a4a4a; }
.tray { display: flex; align-items: center; height: 50px; margin-left: 24px; }
.tr { flex: 0 0 30px; display: flex; align-items: center; justify-content: center; }
.dex {
  display: flex;
  align-items: center;
  justify-content: center;
  width: 21px;
  height: 20px;
  border-radius: 7px;
  background: #d95a38;
  color: #f5e4de;
  font-family: "Liberation Sans", sans-serif;
  font-size: 8.500px;
  font-weight: 700;
}
.tr-ime { font-family: "Noto Sans CJK SC", sans-serif; font-size: 16px; color: #f0f0f0; }
.tr-s { margin-left: 5px; }
```
